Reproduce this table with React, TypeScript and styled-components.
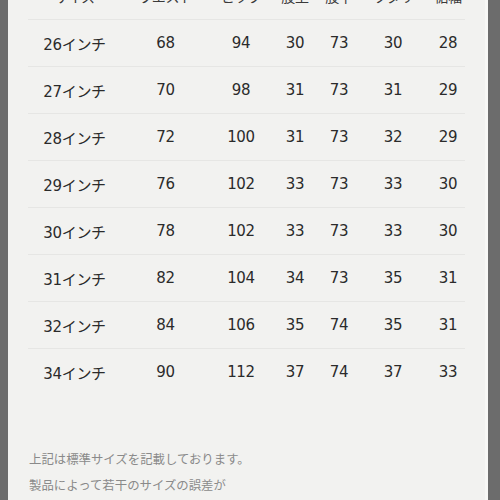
import styled, { createGlobalStyle } from 'styled-components';

type Row = {
	size: string;
	values: number[];
};

const HEADERS = ['サイズ', 'ウエスト', 'ヒップ', '股上', '股下', 'ワタリ', '裾幅'];

const ROWS: Row[] = [
	{ size: '26インチ', values: [68, 94, 30, 73, 30, 28] },
	{ size: '27インチ', values: [70, 98, 31, 73, 31, 29] },
	{ size: '28インチ', values: [72, 100, 31, 73, 32, 29] },
	{ size: '29インチ', values: [76, 102, 33, 73, 33, 30] },
	{ size: '30インチ', values: [78, 102, 33, 73, 33, 30] },
	{ size: '31インチ', values: [82, 104, 34, 73, 35, 31] },
	{ size: '32インチ', values: [84, 106, 35, 74, 35, 31] },
	{ size: '34インチ', values: [90, 112, 37, 74, 37, 33] },
];

const App = () => {
	return (
		<>
			<GlobalStyle />
			<Frame>
				<Sheet>
					<Table>
						<HeaderRow>
							{HEADERS.map(h => (
								<Cell key={h}>{h}</Cell>
							))}
						</HeaderRow>
						{ROWS.map(row => (
							<BodyRow key={row.size}>
								<Cell>{row.size}</Cell>
								{row.values.map((v, i) => (
									<Cell key={i}>{v}</Cell>
								))}
							</BodyRow>
						))}
					</Table>

					{/* Notes */}
					<Notes>
						<Note>上記は標準サイズを記載しております。</Note>
						<Note>製品によって若干のサイズの誤差が</Note>
					</Notes>
				</Sheet>
			</Frame>
		</>
	);
};

const GlobalStyle = createGlobalStyle`
	html, body {
		margin: 0;
		padding: 0;
		background: #6c6c6c;
		overflow: hidden;
	}
`;

const Frame = styled.div`
	width: 500px;
	height: 500px;
	display: flex;
	background: #6c6c6c;
	overflow: hidden;
`;

const Sheet = styled.div`
	margin-left: 8px;
	width: 480px;
	height: 540px;
	background: #f2f2f0;
	border-right: 3px solid #f8f8f6;
	padding: 0 20px;
	box-sizing: border-box;
	display: flex;
	flex-direction: column;
	font-family: 'DejaVu Sans', 'Noto Sans CJK JP', sans-serif;
`;

const Table = styled.div`
	margin-top: -26px;
	display: flex;
	flex-direction: column;
`;

const RowBase = styled.div`
	display: grid;
	grid-template-columns: 93px 89px 62px 46px 42px 66px 44px;
	align-items: center;
	height: 47px;
	box-sizing: border-box;
`;

const HeaderRow = styled(RowBase)`
	height: 45px;
	padding-bottom: 2px;
	font-size: 14px;
	color: #3a3a3a;
`;

const BodyRow = styled(RowBase)`
	border-top: 1.5px solid #e6e6e4;
	font-size: 15px;
	color: #2b2b2b;
`;

const Cell = styled.div`
	text-align: center;
	white-space: nowrap;
	letter-spacing: -0.3px;
`;

const Notes = styled.div`
	margin-top: 55px;
	padding-left: 1px;
	display: flex;
	flex-direction: column;
	gap: 8px;
`;

const Note = styled.div`
	font-family: 'Noto Sans CJK JP', sans-serif;
	font-size: 12.4px;
	line-height: 18px;
	color: #8a8a8a;
`;

export default App;
